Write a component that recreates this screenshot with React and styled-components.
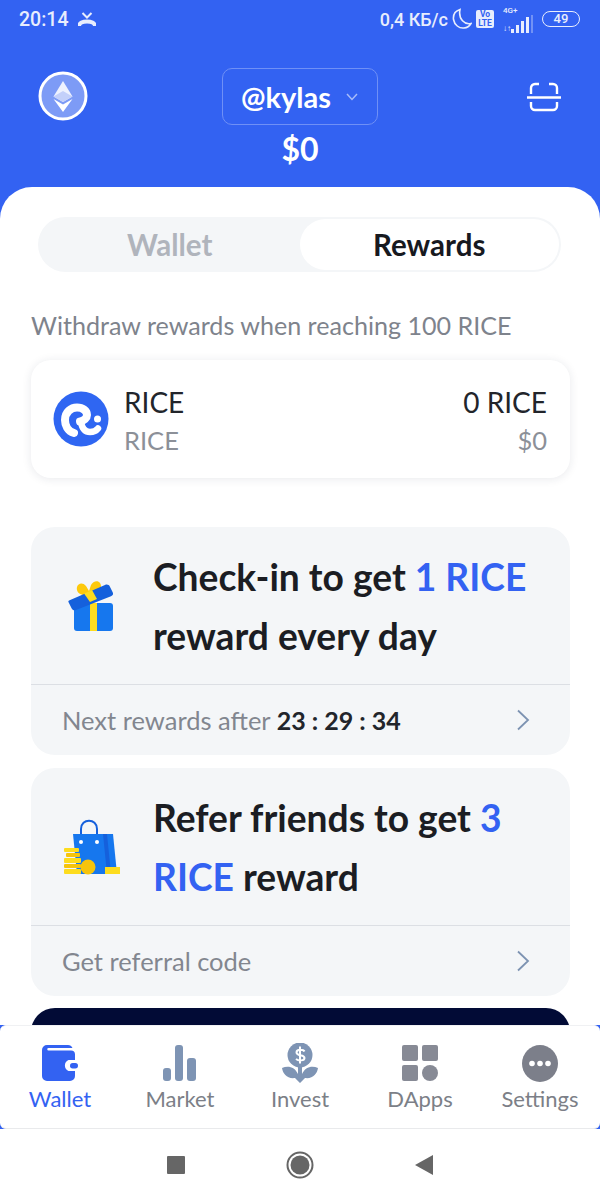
import React from 'react'
import styled, { createGlobalStyle } from 'styled-components'

const Global = createGlobalStyle`
  html, body { margin: 0; padding: 0; background: #fff; }
  body { font-family: "Lato", "Open Sans", sans-serif; }
`
const Page = styled.div`
  width: 600px;
  height: 1200px;
  display: flex;
  flex-direction: column;
  overflow: hidden;
  background: #3362f2;
`
const StatusBar = styled.div`
  height: 36px;
  flex: none;
  padding: 2px 20px 0 19px;
  box-sizing: border-box;
  display: flex;
  align-items: center;
  justify-content: space-between;
  font-family: "Roboto", sans-serif;
  font-weight: 500;
  color: #e8edfd;
  font-size: 18px;
`
const StatusGroup = styled.div`
  display: flex;
  align-items: center;
  gap: ${p => p.$gap}px;
`
const StatusTime = styled.span`
  font-size: 19.5px;
`
const Volte = styled.div`
  width: 18px;
  height: 18px;
  background: #e8edfd;
  border-radius: 2px;
  color: #3362f2;
  font-size: 8.5px;
  line-height: 8.5px;
  font-weight: 700;
  text-align: center;
`
const Network = styled.div`
  display: flex;
  flex-direction: column;
  font-size: 8px;
  line-height: 9px;
  margin-left: 5px;
`
const SignalRow = styled.div`
  display: flex;
  align-items: flex-end;
`
const Battery = styled.div`
  width: 36px;
  height: 14px;
  border: 1.5px solid #e8edfd;
  border-radius: 8px;
  font-size: 13px;
  line-height: 14px;
  text-align: center;
  margin-left: 5px;
`
const Header = styled.div`
  height: 151px;
  flex: none;
  padding: 32px 38px 0;
  box-sizing: border-box;
  display: grid;
  grid-template-columns: 1fr auto 1fr;
  align-items: start;
`
const LogoSlot = styled.div`
  margin-top: 3px;
  display: flex;
`
const ScanSlot = styled.div`
  margin-top: 14px;
  display: flex;
  justify-content: flex-end;
`
const Center = styled.div`
  display: flex;
  flex-direction: column;
  align-items: center;
`
const Account = styled.div`
  width: 156px;
  height: 57px;
  box-sizing: border-box;
  border: 1.5px solid #6f90f6;
  border-radius: 10px;
  display: flex;
  align-items: center;
  justify-content: center;
  gap: 14px;
  color: #fff;
  font-size: 29px;
  font-weight: 700;
`
const Total = styled.div`
  color: #fff;
  font-size: 32px;
  font-weight: 700;
  line-height: 48px;
`
const Sheet = styled.div`
  flex: 1;
  min-height: 0;
  background: #fff;
  border-radius: 32px 32px 0 0;
  padding: 30px 30px 0 31px;
  overflow: hidden;
`
const Tabs = styled.div`
  margin: 0 9px 0 7px;
  height: 55px;
  box-sizing: border-box;
  background: #f4f6f8;
  border-radius: 28px;
  display: flex;
  padding: 2px;
`
const Tab = styled.div`
  flex: 1;
  display: flex;
  align-items: center;
  justify-content: center;
  border-radius: 26px;
  font-size: 29.5px;
  font-weight: 700;
  color: ${p => (p.$active ? '#17191f' : '#b0b4bc')};
  background: ${p => (p.$active ? '#fff' : 'transparent')};
`
const Hint = styled.div`
  margin-top: 38px;
  font-size: 25.1px;
  line-height: 30px;
  color: #7e838c;
`
const CoinCard = styled.div`
  margin-top: 20px;
  height: 118px;
  box-sizing: border-box;
  border-radius: 20px;
  background: #fff;
  box-shadow: 0 1px 10px rgba(30, 40, 70, 0.1);
  padding: 0 23px 0 22px;
  display: flex;
  align-items: center;
  gap: 15px;
`
const CoinText = styled.div`
  flex: 1;
  display: flex;
  flex-direction: column;
  gap: 6px;
  padding-top: 3px;
  align-items: ${p => (p.$end ? 'flex-end' : 'flex-start')};
`
const CoinTop = styled.div`
  font-size: 28px;
  line-height: 32px;
  color: #22252b;
`
const CoinSub = styled.div`
  font-size: 25.5px;
  line-height: 32px;
  color: #8c9098;
`
const RewardCard = styled.div`
  margin-top: ${p => p.$top}px;
  height: 228px;
  border-radius: 24px;
  background: #f4f6f8;
  display: flex;
  flex-direction: column;
`
const RewardBody = styled.div`
  height: 158px;
  flex: none;
  box-sizing: border-box;
  padding-left: 30px;
  display: flex;
  align-items: center;
  gap: 32px;
  border-bottom: 1.5px solid #dcdfe4;
`
const RewardIcon = styled.div`
  width: 60px;
  flex: none;
  display: flex;
  justify-content: center;
`
const RewardTitle = styled.div`
  font-size: 37.2px;
  font-weight: 700;
  line-height: 59px;
  color: #1b1d23;
`
const Accent = styled.span`
  color: #3362f2;
`
const RewardFoot = styled.div`
  flex: 1;
  padding: 0 40px 0 31px;
  display: flex;
  align-items: center;
  justify-content: space-between;
  font-size: 25.5px;
  color: #82868f;
`
const Timer = styled.b`
  color: #22252b;
  font-weight: 700;
  font-size: 25px;
`
const Banner = styled.div`
  margin-top: 12px;
  height: 80px;
  border-radius: 24px 24px 0 0;
  background: #020b36;
`
const TabBar = styled.div`
  height: 104px;
  flex: none;
  background: #fff;
  border-top: 1px solid #f0f1f3;
  border-bottom: 1.5px solid #e9eaec;
  border-radius: 6px;
  display: grid;
  grid-template-columns: repeat(5, 1fr);
  box-sizing: border-box;
`
const NavItem = styled.div`
  display: flex;
  flex-direction: column;
  align-items: center;
  padding-top: 18px;
  font-size: 22px;
  line-height: 30px;
  color: ${p => (p.$active ? '#3362f2' : '#7c7f87')};
  gap: 2px;
`
const NavIconSlot = styled.div`
  height: 38px;
  display: flex;
  align-items: center;
  justify-content: center;
`
const SystemBar = styled.div`
  height: 71px;
  flex: none;
  background: #fff;
  display: flex;
  align-items: center;
  justify-content: center;
  gap: 101px;
`

const CallIcon = () => (
  <svg width="18" height="15" viewBox="0 0 18 15" fill="none">
    <path d="M1 14c0-6 16-6 16 0" stroke="#e8edfd" strokeWidth="4" />
    <path d="M4.500 1L9 5.500 13.500 1" stroke="#e8edfd" strokeWidth="2" />
  </svg>
)
const MoonIcon = () => (
  <svg width="20" height="22" viewBox="0 0 20 22" fill="none">
    <path d="M8 1.500C3 3 1 7 1.500 11.500 2.500 17 7 20.500 12 20c3-.3 5.500-2 7-4.500-6 1.500-13-4-11-14z" stroke="#e8edfd" strokeWidth="1.600" />
  </svg>
)
const SignalIcon = () => (
  <svg width="22" height="18" viewBox="0 0 22 18" fill="#e8edfd">
    <rect x="0" y="14" width="3" height="4" />
    <rect x="5" y="10" width="3" height="8" />
    <rect x="10" y="6" width="3" height="12" />
    <rect x="15" y="2" width="3" height="16" />
    <rect x="20" y="0" width="2" height="18" opacity=".35" />
  </svg>
)
const EthIcon = () => (
  <svg width="50" height="50" viewBox="0 0 50 50">
    <circle cx="25" cy="25" r="23" fill="#7d9bf6" stroke="#fff" strokeWidth="3" />
    <path d="M25 10l-9.500 15.500L25 31l9.500-5.500z" fill="#eef2fe" />
    <path d="M25 20l-9.500 5.500L25 31l9.500-5.500z" fill="#c3d0fa" />
    <path d="M15.500 28L25 41l9.500-13L25 33.500z" fill="#fff" />
  </svg>
)
const ChevronDown = () => (
  <svg width="14" height="10" viewBox="0 0 14 10" fill="none">
    <path d="M2 2l5 5.500L12 2" stroke="#a8bcf8" strokeWidth="1.500" />
  </svg>
)
const ScanIcon = () => (
  <svg width="36" height="30" viewBox="0 0 36 30" fill="none" stroke="#fff" strokeWidth="2.400">
    <path d="M5 12V6a4 4 0 0 1 4-4h4M23 2h4a4 4 0 0 1 4 4v6" />
    <path d="M1 15.500h34" />
    <path d="M5 20v4a4 4 0 0 0 4 4h18a4 4 0 0 0 4-4v-4" />
  </svg>
)
const RiceLogo = () => (
  <svg width="56" height="56" viewBox="0 0 56 56" fill="none" stroke="#fff" strokeLinecap="round">
    <circle cx="28" cy="28" r="27.500" fill="#2f66f2" stroke="none" />
    <path d="M21 42C14.500 40 12 34 12 29c0-8 6-12.500 12-12.500 6 0 10 3.500 10 7.500 0 3-3 6-7 6.500" strokeWidth="8" />
    <path d="M28 31c1 6 4 10 9 10 3 0 6-1 8-3.500" strokeWidth="6.500" />
    <circle cx="44.500" cy="28" r="3.500" fill="#fff" stroke="none" />
  </svg>
)
const GiftIcon = () => (
  <svg width="46" height="52" viewBox="0 0 46 52">
    <path d="M19 15C11 16 8 11 9 7c1-4 6-5 9-1l3 5 2-6c2-4 7-5 9-2 2 3 1 8-3 10z" fill="#fdc90c" />
    <rect x="6" y="23" width="39" height="28" rx="3" fill="#1677ee" />
    <rect x="22" y="23" width="7" height="28" fill="#fddc1e" />
    <path d="M1 20.500L37 5c2-.9 4-.2 4.800 1.500l3 6c.7 1.800 0 3-1.800 3.800L8 30c-2 .8-3.500 0-4.300-1.500l-3-6c-.6-1 -.4-1.500.3-2z" fill="#1560dc" />
    <path d="M16 13.500l8-3.500 5 9-7 3z" fill="#fddc1e" />
  </svg>
)
const BagIcon = () => (
  <svg width="57" height="56" viewBox="0 0 57 56" fill="none">
    <path d="M18 23V10c0-11 16-11 16 0v13" stroke="#1560dc" strokeWidth="2" />
    <path d="M10 15h40l4 40H14z" fill="#1677ee" />
    <path d="M40 15h4l4 40h-4z" fill="#1560dc" />
    <circle cx="18" cy="23" r="2" fill="#fff" />
    <circle cx="34" cy="23" r="2" fill="#fff" />
    <rect x="1" y="29" width="15" height="4" rx="1" fill="#fddc1e" />
    <rect x="3" y="34" width="14" height="4" rx="1" fill="#f6c40c" />
    <rect x="1" y="39" width="17" height="5" rx="1" fill="#fddc1e" />
    <rect x="1" y="45" width="17" height="4" rx="1" fill="#f6c40c" />
    <rect x="1" y="50" width="17" height="5" rx="1" fill="#fddc1e" />
    <circle cx="25" cy="48" r="7.500" fill="#f6c40c" />
    <rect x="42" y="48" width="15" height="7" fill="#fddc1e" />
  </svg>
)
const WalletIcon = () => (
  <svg width="36" height="36" viewBox="0 0 36 36">
    <path d="M5 0h21a5 5 0 0 1 4.500 3H6.500a1 1 0 0 0 0 2.500H29a4 4 0 0 1 4 4V15h-6.500a6 6 0 0 0 0 11H33v5a5 5 0 0 1-5 5H5a5 5 0 0 1-5-5V5a5 5 0 0 1 5-5z" fill="#3362f2" />
    <rect x="28" y="18" width="8" height="5.500" rx="2.700" fill="#3362f2" />
  </svg>
)
const MarketIcon = () => (
  <svg width="36" height="36" viewBox="0 0 36 36" fill="#7e94b4">
    <rect x="1" y="23" width="8" height="13" rx="3" />
    <rect x="13" y="0" width="8" height="36" rx="3" />
    <rect x="25" y="13" width="9" height="23" rx="3" />
  </svg>
)
const InvestIcon = () => (
  <svg width="36" height="40" viewBox="0 0 36 40">
    <circle cx="18" cy="12" r="12.500" fill="#7e94b4" />
    <path d="M0 25c6-3 13-1 16 6v-8h4v8c3-7 10-9 16-6-1 6-5 11-13 10l-5 5-5-5C5 36 1 31 0 25z" fill="#7e94b4" />
    <path d="M22.500 8.500c-1-2-8-3-8 1 0 4 8 1.500 8 5.500 0 3-6 3-8.500 1M18 3.500v17" stroke="#fff" strokeWidth="2" fill="none" />
  </svg>
)
const DappsIcon = () => (
  <svg width="36" height="36" viewBox="0 0 36 36" fill="#878a95">
    <rect x="0" y="0" width="16" height="16" rx="2" />
    <rect x="20" y="0" width="16" height="16" rx="2" />
    <rect x="0" y="20" width="16" height="16" rx="2" />
    <circle cx="28" cy="28" r="8" />
  </svg>
)
const SettingsIcon = () => (
  <svg width="36" height="37" viewBox="0 0 36 37">
    <ellipse cx="18" cy="18.500" rx="18" ry="18.500" fill="#7c7f8a" />
    <circle cx="10" cy="18.500" r="2.800" fill="#fff" />
    <circle cx="18" cy="18.500" r="2.800" fill="#fff" />
    <circle cx="26" cy="18.500" r="2.800" fill="#fff" />
  </svg>
)
const ChevronRight = () => (
  <svg width="14" height="22" viewBox="0 0 14 22" fill="none">
    <path d="M2 1.500l10 9.500-10 9.500" stroke="#7d93b2" strokeWidth="1.800" />
  </svg>
)

const navItems = [
  { label: 'Wallet', Icon: WalletIcon, active: true },
  { label: 'Market', Icon: MarketIcon },
  { label: 'Invest', Icon: InvestIcon },
  { label: 'DApps', Icon: DappsIcon },
  { label: 'Settings', Icon: SettingsIcon },
]

export default function App() {
  return (
    <Page>
      <Global />
      <StatusBar>
        <StatusGroup $gap={10}>
          <StatusTime>20:14</StatusTime> <CallIcon />
        </StatusGroup>
        <StatusGroup $gap={4}>
          0,4 КБ/с <MoonIcon />
          <Volte>Vo<br />LTE</Volte>
          <Network>
            4G+
            <SignalRow>↓↑<SignalIcon /></SignalRow>
          </Network>
          <Battery>49</Battery>
        </StatusGroup>
      </StatusBar>
      <Header>
        <LogoSlot><EthIcon /></LogoSlot>
        <Center>
          <Account>
            @kylas <ChevronDown />
          </Account>
          <Total>$0</Total>
        </Center>
        <ScanSlot><ScanIcon /></ScanSlot>
      </Header>
      <Sheet>
        <Tabs>
          <Tab>Wallet</Tab>
          <Tab $active>Rewards</Tab>
        </Tabs>
        <Hint>Withdraw rewards when reaching 100 RICE</Hint>
        <CoinCard>
          <RiceLogo />
          <CoinText>
            <CoinTop>RICE</CoinTop>
            <CoinSub>RICE</CoinSub>
          </CoinText>
          <CoinText $end>
            <CoinTop>0 RICE</CoinTop>
            <CoinSub>$0</CoinSub>
          </CoinText>
        </CoinCard>
        <RewardCard $top={49}>
          <RewardBody>
            <RewardIcon><GiftIcon /></RewardIcon>
            <RewardTitle>
              Check-in to get <Accent>1 RICE</Accent><br />reward every day
            </RewardTitle>
          </RewardBody>
          <RewardFoot>
            <span>Next rewards after <Timer>23 : 29 : 34</Timer></span>
            <ChevronRight />
          </RewardFoot>
        </RewardCard>
        <RewardCard $top={13}>
          <RewardBody>
            <RewardIcon><BagIcon /></RewardIcon>
            <RewardTitle>
              Refer friends to get <Accent>3</Accent><br /><Accent>RICE</Accent> reward
            </RewardTitle>
          </RewardBody>
          <RewardFoot>
            <span>Get referral code</span>
            <ChevronRight />
          </RewardFoot>
        </RewardCard>
        <Banner />
      </Sheet>
      <TabBar>
        {navItems.map(({ label, Icon, active }) => (
          <NavItem key={label} $active={active}>
            <NavIconSlot><Icon /></NavIconSlot>
            {label}
          </NavItem>
        ))}
      </TabBar>
      <SystemBar>
        <svg width="18" height="18" viewBox="0 0 18 18"><rect width="18" height="18" rx="1" fill="#666" /></svg>
        <svg width="28" height="28" viewBox="0 0 28 28"><circle cx="14" cy="14" r="12.500" fill="none" stroke="#666" strokeWidth="2" /><circle cx="14" cy="14" r="9.500" fill="#666" /></svg>
        <svg width="18" height="20" viewBox="0 0 18 20"><path d="M18 0v20L0 10z" fill="#666" /></svg>
      </SystemBar>
    </Page>
  )
}
